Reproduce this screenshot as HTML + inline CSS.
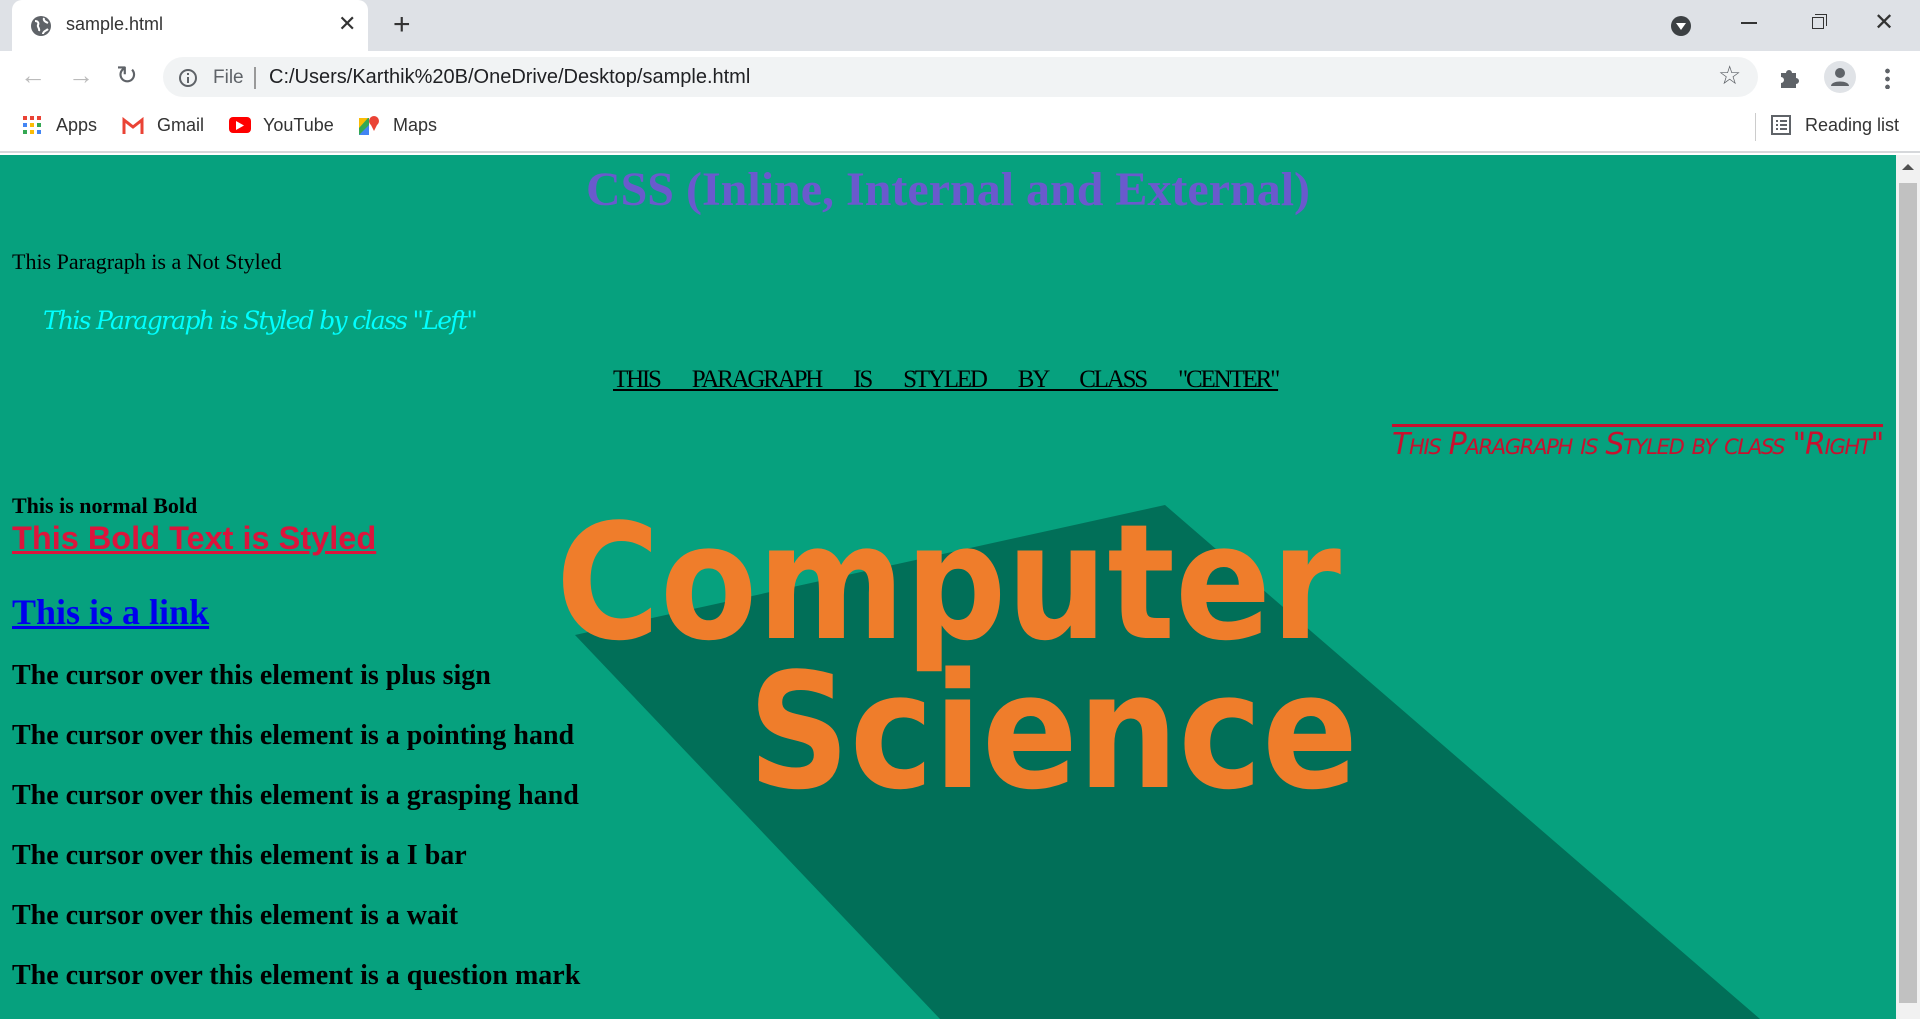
<!DOCTYPE html>
<html><head><meta charset="utf-8"><style>
*{margin:0;padding:0;box-sizing:border-box}
body{width:1920px;height:1019px;overflow:hidden;position:relative;background:#fff;font-family:"Liberation Sans",sans-serif}
.tabs{position:absolute;left:0;top:0;width:1920px;height:51px;background:#dee1e6}
.tab{position:absolute;left:12px;top:0;width:356px;height:51px;background:#fff;border-radius:10px 10px 0 0}
.toolbar{position:absolute;left:0;top:51px;width:1920px;height:52px;background:#fff}
.omni{position:absolute;left:163px;top:6px;width:1595px;height:40px;background:#f1f3f4;border-radius:20px}
.bm{position:absolute;left:0;top:103px;width:1920px;height:50px;background:#fff;border-bottom:2px solid #d6d8db}
.t{position:absolute;font-size:18px;color:#333;white-space:nowrap}
.page{position:absolute;left:0;top:155px;width:1896px;height:864px;background:#06a17e;overflow:hidden;font-family:"Liberation Serif",serif}
.sb{position:absolute;left:1896px;top:155px;width:24px;height:864px;background:#f1f1f1}
.p{position:absolute;white-space:nowrap}
.c{font-size:28px;font-weight:bold;left:12px}
</style></head><body>
<div class="tabs"><div class="tab"></div>
<svg style="position:absolute;left:30px;top:15px" width="22" height="22" viewBox="0 0 22 22"><circle cx="11" cy="11" r="10" fill="#5f6368"/><path d="M5 6c3 0 4 2 3 4s2 3 1 6M14 3c-1 3 2 4 4 5M13 19c0-3 3-3 5-5" stroke="#fff" stroke-width="2" fill="none"/></svg>
<div class="t" style="left:66px;top:14px">sample.html</div>
<div class="t" style="left:338px;top:11px;font-size:22px">✕</div>
<div class="t" style="left:393px;top:8px;font-size:30px;color:#333">+</div>
<svg style="position:absolute;left:1670px;top:15px" width="22" height="22"><circle cx="11" cy="11" r="10" fill="#3c4043"/><path d="M6 8h10l-5 7z" fill="#fff"/></svg>
<div style="position:absolute;left:1741px;top:22px;width:16px;height:1.5px;background:#333"></div>
<div style="position:absolute;left:1812px;top:17px;width:12px;height:12px;border:1.5px solid #333;background:#dee1e6"></div>
<div style="position:absolute;left:1815px;top:14px;width:12px;height:12px;border-top:1.5px solid #333;border-right:1.5px solid #333"></div>
<div class="t" style="left:1874px;top:8px;font-size:24px;font-weight:100">✕</div>
</div>
<div class="toolbar">
<div class="t" style="left:20px;top:9px;font-size:26px;color:#bbb">←</div>
<div class="t" style="left:68px;top:9px;font-size:26px;color:#bbb">→</div>
<div class="t" style="left:116px;top:9px;font-size:26px;color:#5f6368">↻</div>
<div class="omni"></div>
<svg style="position:absolute;left:178px;top:17px" width="20" height="20"><circle cx="10" cy="10" r="8" stroke="#5f6368" stroke-width="2" fill="none"/><path d="M10 9v6M10 5v2" stroke="#5f6368" stroke-width="2"/></svg>
<div class="t" style="left:213px;top:16px;color:#5f6368;font-size:19px">File</div>
<div style="position:absolute;left:254px;top:16px;width:2px;height:22px;background:#999"></div>
<div class="t" style="left:269px;top:15px;color:#202124;font-size:20px">C:/Users/Karthik%20B/OneDrive/Desktop/sample.html</div>
<div class="t" style="left:1718px;top:9px;font-size:26px;color:#5f6368">☆</div>
<svg style="position:absolute;left:1778px;top:16px" width="22" height="22"><path d="M3 6h5a3 3 0 016 0h4v5a3 3 0 010 6v4H3v-5a3 3 0 000-6z" fill="#5f6368"/></svg>
<div style="position:absolute;left:1824px;top:10px;width:32px;height:32px;border-radius:50%;background:#e0e3e7"></div>
<svg style="position:absolute;left:1830px;top:16px" width="20" height="20"><circle cx="10" cy="6" r="5" fill="#5f6368"/><path d="M1 19c0-6 18-6 18 0z" fill="#5f6368"/></svg>
<div style="position:absolute;left:1885px;top:16px;width:5px;height:22px;background:radial-gradient(circle,#5f6368 2.2px,transparent 2.5px) 0 0/5px 8px"></div>
</div>
<div class="bm">
<div style="position:absolute;left:23px;top:13px;width:18px;height:18px;background:
radial-gradient(#ea4335 0 0) 0 0/4px 4px no-repeat,radial-gradient(#ea4335 0 0) 7px 0/4px 4px no-repeat,radial-gradient(#ea4335 0 0) 14px 0/4px 4px no-repeat,radial-gradient(#4285f4 0 0) 0 7px/4px 4px no-repeat,radial-gradient(#fbbc05 0 0) 7px 7px/4px 4px no-repeat,radial-gradient(#34a853 0 0) 14px 7px/4px 4px no-repeat,radial-gradient(#34a853 0 0) 0 14px/4px 4px no-repeat,radial-gradient(#fbbc05 0 0) 7px 14px/4px 4px no-repeat,radial-gradient(#4285f4 0 0) 14px 14px/4px 4px no-repeat"></div>
<div class="t" style="left:56px;top:12px">Apps</div>
<svg style="position:absolute;left:122px;top:14px" width="22" height="18"><path d="M2 17V3l9 7 9-7v14" stroke="#ea4335" stroke-width="3" fill="none"/></svg>
<div class="t" style="left:157px;top:12px">Gmail</div>
<div style="position:absolute;left:229px;top:14px;width:22px;height:16px;border-radius:4px;background:#f00"></div>
<svg style="position:absolute;left:236px;top:18px" width="8" height="9"><path d="M0 0l8 4.5L0 9z" fill="#fff"/></svg>
<div class="t" style="left:263px;top:12px">YouTube</div>
<svg style="position:absolute;left:358px;top:11px" width="22" height="22"><path d="M1 4l10 0 0 17-10 0z" fill="#34a853"/><path d="M1 21L11 11v10z" fill="#4285f4"/><path d="M1 4h9L1 14z" fill="#fbbc05"/><circle cx="16" cy="7" r="5" fill="#ea4335"/><path d="M12 9l4 8 4-8z" fill="#ea4335"/></svg>
<div class="t" style="left:393px;top:12px">Maps</div>
<div style="position:absolute;left:1755px;top:10px;width:1px;height:28px;background:#ccc"></div>
<svg style="position:absolute;left:1771px;top:12px" width="20" height="20"><rect x="1" y="1" width="18" height="18" fill="none" stroke="#5f6368" stroke-width="2"/><path d="M5 6h2M9 6h7M5 10h2M9 10h7M5 14h2M9 14h7" stroke="#5f6368" stroke-width="2"/></svg>
<div class="t" style="left:1805px;top:12px">Reading list</div>
</div>
<div class="page">
<svg style="position:absolute;left:0;top:0" width="1896" height="864">
<polygon points="575,480 1165,350 1760,864 940,864" fill="#016f58"/>
<text x="556" y="483" font-family="DejaVu Sans" font-weight="bold" font-size="160" fill="#ef7d2b" textLength="785" lengthAdjust="spacingAndGlyphs">Computer</text>
<text x="748" y="632" font-family="DejaVu Sans" font-weight="bold" font-size="160" fill="#ef7d2b" textLength="610" lengthAdjust="spacingAndGlyphs">Science</text>
</svg>
<div class="p" style="left:0;width:1896px;text-align:center;top:7px;font-size:48px;font-weight:bold;color:#6a5acd">CSS (Inline, Internal and External)</div>
<div class="p" style="left:12px;top:94px;font-size:22px">This Paragraph is a Not Styled</div>
<div class="p" style="left:43px;top:151px;font-size:25px;font-style:italic;color:#00ffff;font-family:'DejaVu Serif',serif;letter-spacing:-1.7px">This Paragraph is Styled by class "Left"</div>
<div class="p" style="left:613px;top:211px;font-size:25px;text-decoration:underline;word-spacing:28px;letter-spacing:-2.2px">THIS PARAGRAPH IS STYLED BY CLASS "CENTER"</div>
<div class="p" style="right:13px;top:272px;font-size:30px;font-style:italic;font-variant:small-caps;color:#c8102e;text-decoration:overline;font-family:'DejaVu Sans',sans-serif;letter-spacing:-1.3px">This Paragraph is Styled by class "Right"</div>
<div class="p" style="left:12px;top:338px;font-size:22px;font-weight:bold">This is normal Bold</div>
<div class="p" style="left:12px;top:365px;font-size:32.5px;font-weight:bold;font-family:'Liberation Sans',sans-serif;color:#dc143c;text-decoration:underline">This Bold Text is Styled</div>
<div class="p" style="left:12px;top:436px;font-size:36px;font-weight:bold;color:#0000ee;text-decoration:underline">This is a link</div>
<div class="p c" style="top:505px">The cursor over this element is plus sign</div>
<div class="p c" style="top:565px">The cursor over this element is a pointing hand</div>
<div class="p c" style="top:625px">The cursor over this element is a grasping hand</div>
<div class="p c" style="top:685px">The cursor over this element is a I bar</div>
<div class="p c" style="top:745px">The cursor over this element is a wait</div>
<div class="p c" style="top:805px">The cursor over this element is a question mark</div>
</div>
<div class="sb"><svg style="position:absolute;left:6px;top:8px" width="12" height="8"><path d="M0 7l6-6 6 6z" fill="#505050"/></svg>
<div style="position:absolute;left:3px;top:28px;width:18px;height:820px;background:#c1c1c1"></div></div>
</body></html>
